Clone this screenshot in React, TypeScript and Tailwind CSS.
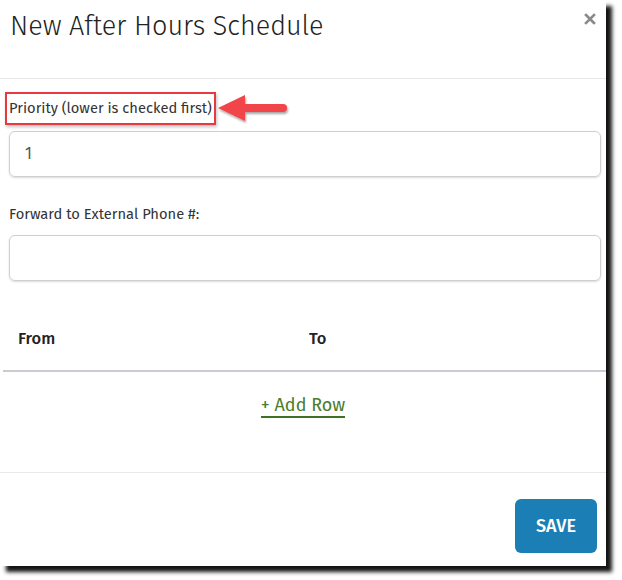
import React from 'react';

const font = { fontFamily: '"Fira Sans", Lato, "Noto Sans", sans-serif' };

function Arrow() {
  return (
    <svg className="absolute left-[214px] top-[90px]" width="80" height="40" viewBox="0 0 80 40">
      <defs>
        <filter id="sh" x="-20%" y="-20%" width="140%" height="160%">
          <feDropShadow dx="1" dy="2" stdDeviation="1.2" floodColor="#000" floodOpacity="0.35" />
        </filter>
      </defs>
      <g filter="url(#sh)" fill="#f1444a">
        <polygon points="4,18 31,5 31,31" />
        <path d="M30 14 H69 a4 4 0 0 1 0 8 H30 Z" />
      </g>
    </svg>
  );
}

export default function App() {
  return (
    <div className="w-[622px] h-[580px] bg-white" style={font}>
      <div className="relative w-[606px] h-[566px] bg-white shadow-[6px_6px_4px_rgba(0,0,0,0.92)] flex flex-col">
        {/* header */}
        <div className="h-[79px] border-b border-[#e6e8eb] flex items-start justify-between pl-[10px] pr-[10px] pt-[9px]">
          <h1 className="text-[27px] leading-[34px] font-light text-[#222]">New After Hours Schedule</h1>
          <svg className="mt-[4px]" width="12" height="12" viewBox="0 0 12 12">
            <path d="M2 2 L10 10 M10 2 L2 10" stroke="#8a8a8a" strokeWidth="2.6" strokeLinecap="square" />
          </svg>
        </div>

        {/* body */}
        <div className="flex flex-col pl-[9px] pr-[5px]">
          <div className="mt-[13px]">
            <span className="inline-block border-2 border-[#e8393f] shadow-[1px_2px_3px_rgba(0,0,0,0.25)] -ml-[4px] px-[2px] py-[5px] text-[14.7px] leading-[19px] text-[#333]">
              Priority (lower is checked first)
            </span>
          </div>
          <div className="mt-[6px] h-[46px] rounded-[6px] border border-[#cfcfcf] shadow-[0_1px_2px_rgba(0,0,0,0.15)] flex items-center px-[15px] text-[16px] text-[#555]">
            1
          </div>

          <div className="mt-[27px] text-[14.7px] leading-[20px] text-[#333]">Forward to External Phone #:</div>
          <div className="mt-[11px] h-[46px] rounded-[6px] border border-[#cfcfcf] shadow-[0_1px_2px_rgba(0,0,0,0.15)]" />
        </div>

        {/* table */}
        <div className="ml-[3px] mt-[38px] grid grid-cols-[291px_1fr] border-b-2 border-[#c9cdd1] h-[53px] items-start text-[16.5px] font-medium text-[#222]">
          <div className="pl-[15px] pt-[8px]">From</div>
          <div className="pl-[15px] pt-[8px]">To</div>
        </div>

        <div className="flex justify-center mt-[22px]">
          <span className="text-[18px] leading-[22px] text-[#4a7d2b] border-b-2 border-[#3f7322]">+ Add Row</span>
        </div>

        {/* footer */}
        <div className="mt-[54px] border-t border-[#e6e8eb] flex justify-end pr-[9px] pt-[26px]">
          <button className="w-[82px] h-[54px] rounded-[6px] bg-[#1b7fb6] text-white text-[18px] font-medium">SAVE</button>
        </div>

        <Arrow />
      </div>
    </div>
  );
}
